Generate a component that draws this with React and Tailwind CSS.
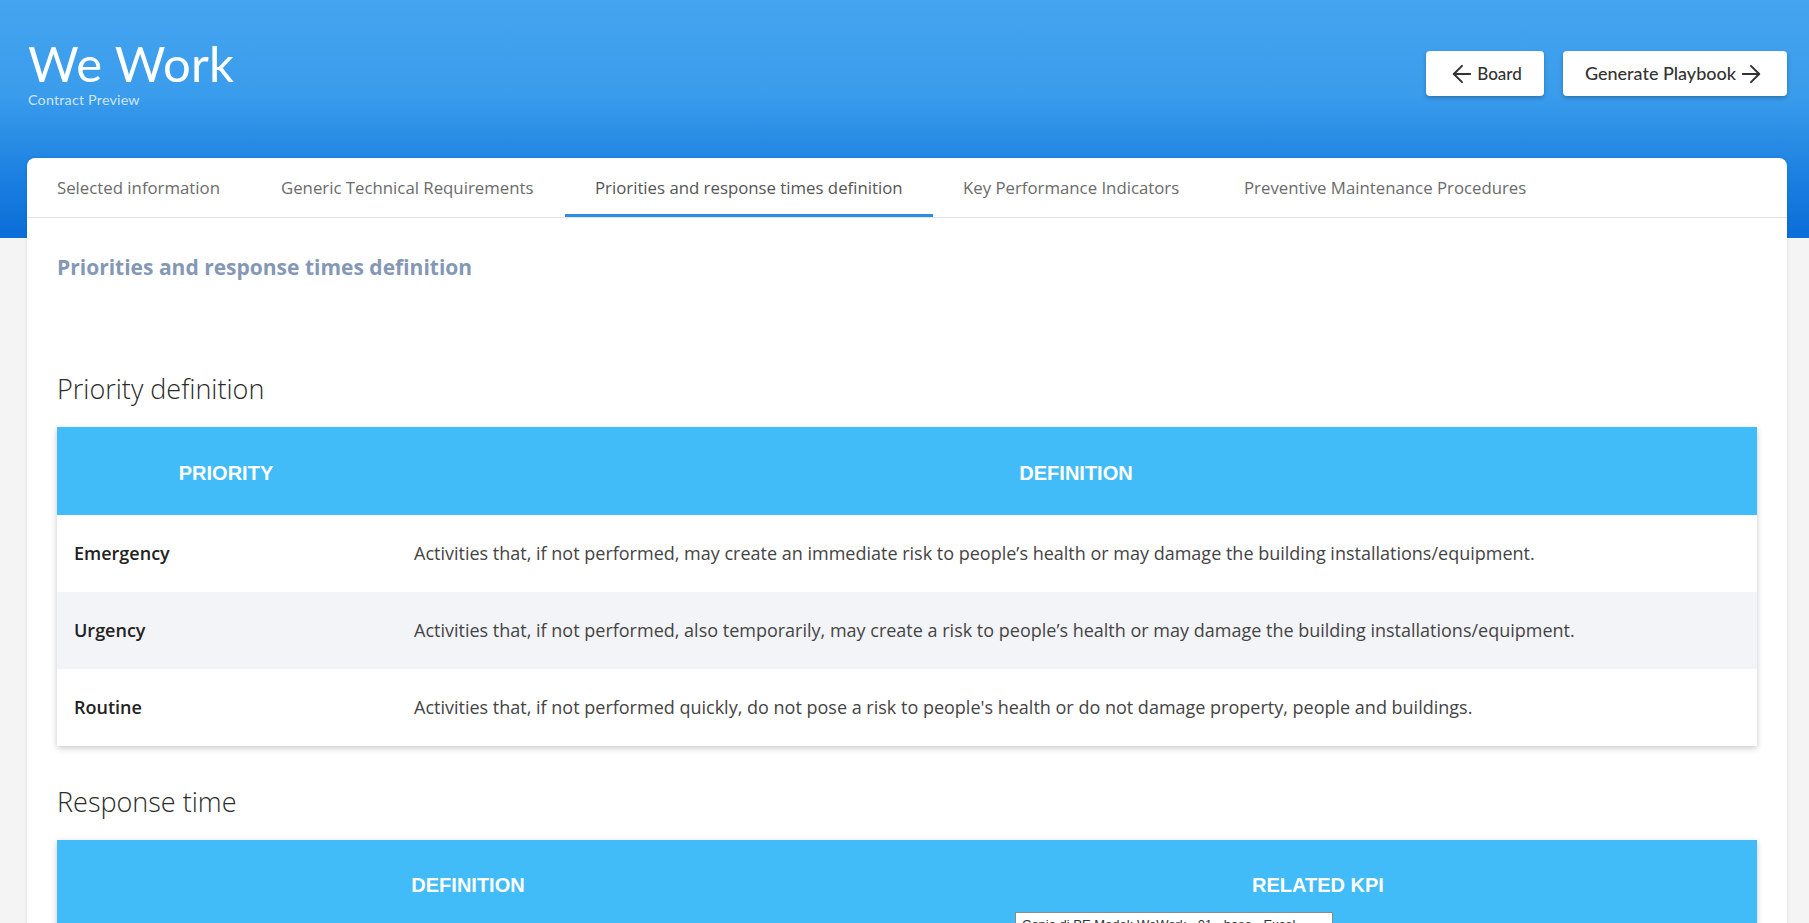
import { ArrowLeft, ArrowRight } from 'lucide-react';

const TABS = [
  { label: 'Selected information', w: 'w-[224px]' },
  { label: 'Generic Technical Requirements', w: 'w-[314px]' },
  { label: 'Priorities and response times definition', w: 'w-[368px]', active: true },
  { label: 'Key Performance Indicators', w: 'w-[281px]' },
  { label: 'Preventive Maintenance Procedures', w: 'w-[345px]' },
];

const PRIORITIES = [
  {
    name: 'Emergency',
    text: 'Activities that, if not performed, may create an immediate risk to people’s health or may damage the building installations/equipment.',
  },
  {
    name: 'Urgency',
    text: 'Activities that, if not performed, also temporarily, may create a risk to people’s health or may damage the building installations/equipment.',
  },
  {
    name: 'Routine',
    text: "Activities that, if not performed quickly, do not pose a risk to people's health or do not damage property, people and buildings.",
  },
];

export default function App() {
  return (
    <div className="min-h-screen bg-[#f4f4f4] font-['Open_Sans','Lato',sans-serif]">
      {/* Blue header */}
      <header className="h-[238px] bg-[linear-gradient(to_bottom,#44a4ef_0%,#3a9cec_40%,#1a7fe0_75%,#0b6dd8_100%)] pl-[28px] pr-[22px] pt-[33px]">
        <div className="flex items-start justify-between">
          <div>
            <h1 className="text-[49px] leading-[60px] text-white font-normal tracking-[0.3px] font-['Lato',sans-serif]">We Work</h1>
            <p className="text-[14.3px] leading-[16px] text-[#cfe4fa] -mt-[1px] font-['Lato',sans-serif] tracking-[0.2px]">Contract Preview</p>
          </div>
          <div className="flex gap-[19px] mt-[18px]">
            <button className="w-[118px] h-[45px] bg-white rounded-[4px] shadow-[0_2px_4px_rgba(0,0,0,0.25)] flex items-center justify-center gap-[1px] text-[17px] text-[#333] font-['Lato',sans-serif] font-medium">
              <ArrowLeft size={28} strokeWidth={1.7} />
              Board
            </button>
            <button className="w-[224px] h-[45px] bg-white rounded-[4px] shadow-[0_2px_4px_rgba(0,0,0,0.25)] flex items-center justify-center gap-[1px] text-[18px] text-[#333] font-['Lato',sans-serif] font-medium">
              Generate Playbook
              <ArrowRight size={28} strokeWidth={1.7} />
            </button>
          </div>
        </div>
      </header>

      {/* Content card */}
      <div className="pl-[27px] pr-[22px] -mt-[80px]">
        <div className="bg-white rounded-t-[8px] shadow-[0_0_3px_rgba(0,0,0,0.12)] min-h-[800px]">
          {/* Tabs */}
          <nav className="flex h-[60px] border-b border-[#e2e2e2]">
            {TABS.map((tab) => (
              <div
                key={tab.label}
                className={`${tab.w} shrink-0 flex items-center px-[30px] text-[16.8px] whitespace-nowrap ${
                  tab.active
                    ? 'text-[#555] border-b-[3px] border-[#2a8de8] pt-[3px]'
                    : 'text-[#6b6b6b]'
                }`}
              >
                {tab.label}
              </div>
            ))}
          </nav>

          <div className="px-[30px]">
            <h2 className="mt-[35px] text-[21px] leading-[28px] font-bold text-[#8498b6]">
              Priorities and response times definition
            </h2>

            <h3 className="mt-[92px] text-[27px] leading-[32px] font-light text-[#2b2b2b]">Priority definition</h3>

            {/* Priority table */}
            <div className="mt-[22px] shadow-[0_2px_6px_rgba(0,0,0,0.22)]">
              <div className="flex h-[88px] bg-[#41bcf8] items-center text-white font-bold text-[20px] pt-[3px] font-['Liberation_Sans',Arial,sans-serif]">
                <div className="w-[338px] text-center">PRIORITY</div>
                <div className="flex-1 text-center">DEFINITION</div>
              </div>
              {PRIORITIES.map((p, i) => (
                <div
                  key={p.name}
                  className={`flex h-[77px] items-center ${i % 2 === 1 ? 'bg-[#f3f4f8]' : 'bg-white'}`}
                >
                  <div className="w-[338px] pl-[17px] text-[18px] font-semibold text-[#222]">{p.name}</div>
                  <div className="flex-1 pl-[19px] text-[18px] text-[#444]">{p.text}</div>
                </div>
              ))}
            </div>

            <h3 className="mt-[40px] text-[27px] leading-[32px] font-light text-[#2b2b2b]">Response time</h3>

            {/* Response time table */}
            <div className="relative mt-[22px] shadow-[0_2px_6px_rgba(0,0,0,0.22)]">
              <div className="flex h-[88px] bg-[#41bcf8] items-center text-white font-bold text-[20px] pt-[2px] font-['Liberation_Sans',Arial,sans-serif]">
                <div className="w-[822px] text-center">DEFINITION</div>
                <div className="flex-1 text-center">RELATED KPI</div>
              </div>
              <div className="flex h-[77px] items-center bg-white">
                <div className="w-[822px] pl-[17px] text-[18px] text-[#444]">Emergency</div>
                <div className="flex-1 pl-[19px] text-[18px] text-[#444]">KPI 01</div>
              </div>
              <div className="absolute left-[958px] top-[72px] w-[318px] h-[30px] bg-white border border-[#8a8a8a] px-[6px] pt-[2px] text-[13px] text-[#333] font-['Liberation_Sans',Arial,sans-serif] whitespace-nowrap overflow-hidden">
                Copia di PE Model: WeWork - 01 - base - Excel
              </div>
            </div>
          </div>
        </div>
      </div>
    </div>
  );
}
